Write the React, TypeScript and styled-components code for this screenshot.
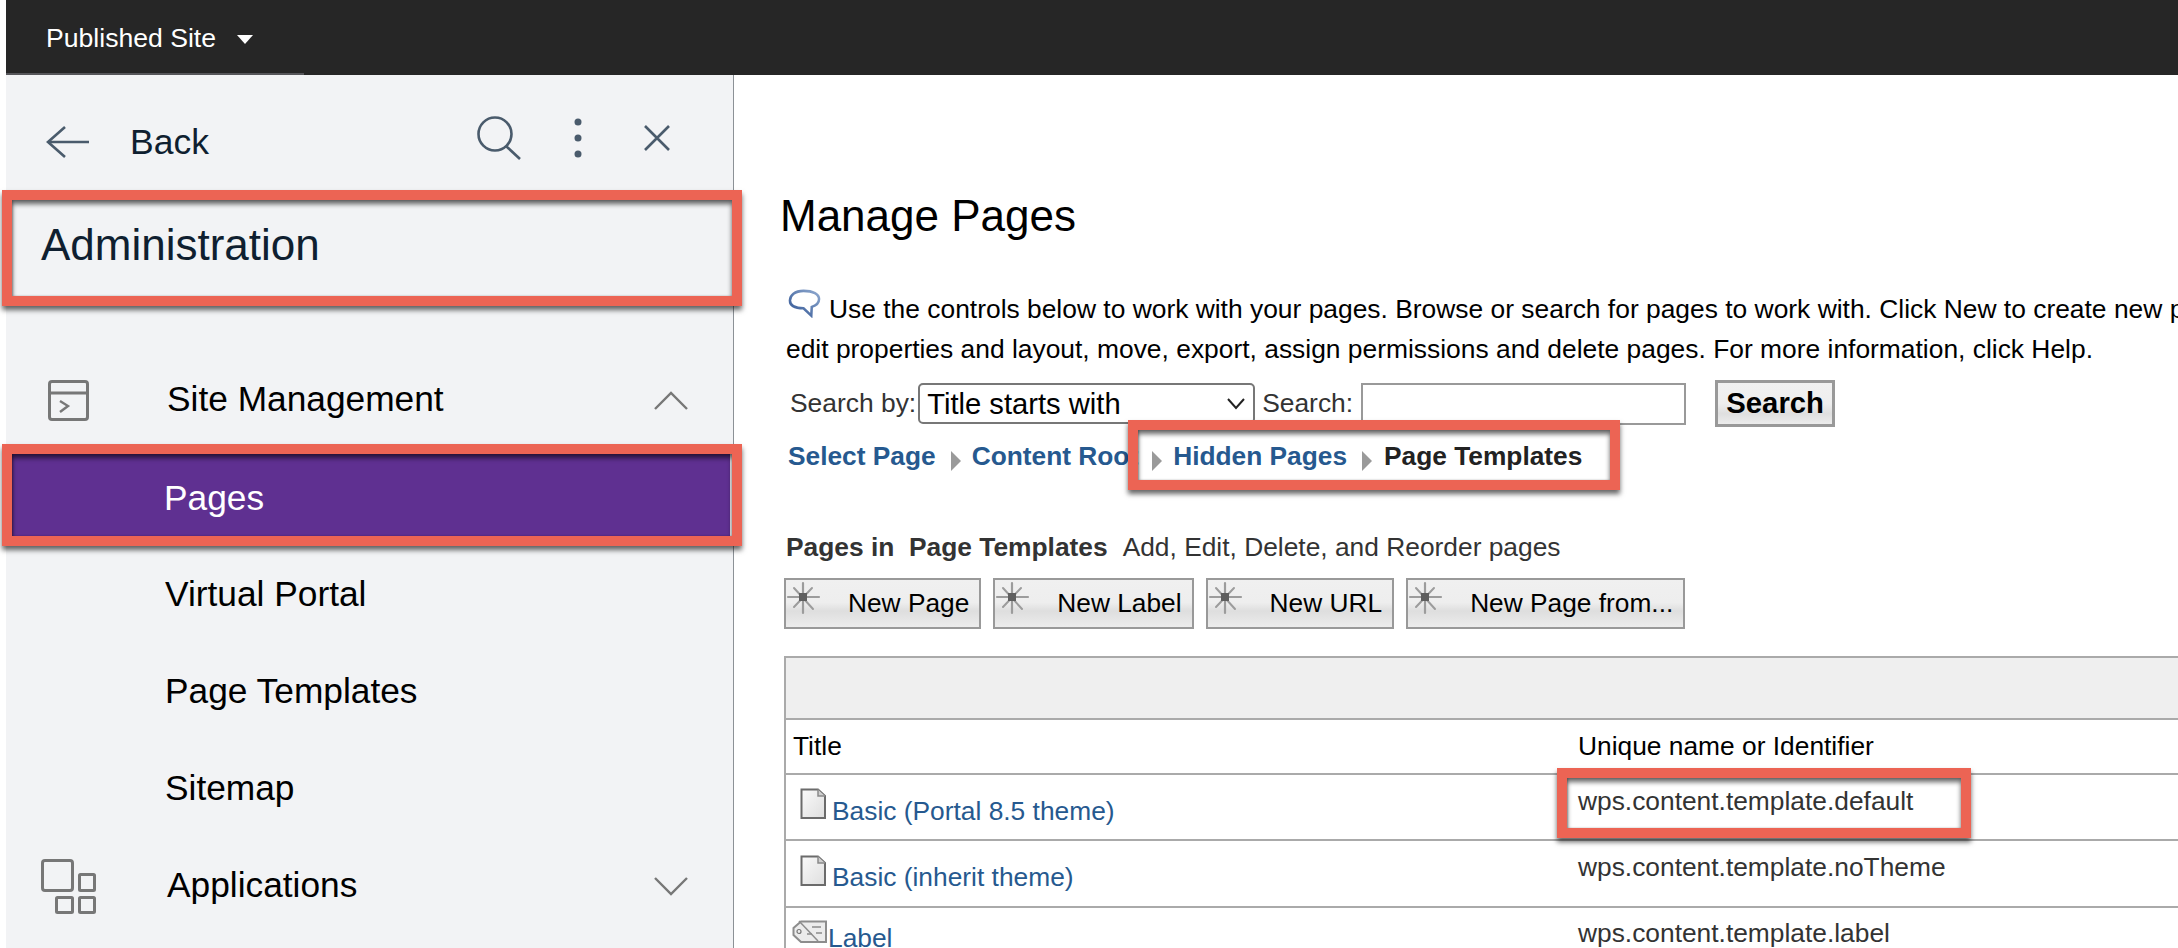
import React from "react";
import styled, { createGlobalStyle } from "styled-components";

const Global = createGlobalStyle`
  html, body { margin: 0; padding: 0; background: #fff; }
  body { font-family: "Liberation Sans", Arial, sans-serif; }
  * { box-sizing: border-box; }
`;

const Shell = styled.div`
  width: 2178px;
  height: 948px;
  padding-left: 6px;
  background: #fff;
  overflow: hidden;
  display: flex;
  flex-direction: column;
`;

const TopBar = styled.header`
  height: 75px;
  flex: none;
  background: #262626;
  display: flex;
  align-items: flex-start;
`;

const SiteSwitcher = styled.div`
  width: 298px;
  height: 75px;
  border-bottom: 2px solid #56565a;
  padding: 22px 0 0 40px;
  display: flex;
  align-items: flex-start;
  color: #fff;
  font-size: 26.6px;
  line-height: 32px;
`;

const Caret = styled.svg`
  margin: 13px 0 0 21px;
`;

const Body = styled.div`
  flex: 1;
  display: flex;
  min-height: 0;
`;

const Sidebar = styled.aside`
  width: 728px;
  flex: none;
  background: #f2f3f5;
  border-right: 1px solid #8c9196;
  display: flex;
  flex-direction: column;
`;

const BackRow = styled.div`
  height: 115px;
  flex: none;
  padding: 19px 63px 0 40px;
  display: flex;
  align-items: center;
  color: #0f1f30;
  font-size: 35.5px;
`;

const BackLabel = styled.span`
  margin-left: 40px;
`;

const ToolGroup = styled.div`
  margin-left: auto;
  display: flex;
  align-items: center;
  padding-bottom: 9px;
`;

const ToolIcon = styled.svg<{ $gap?: number }>`
  display: block;
  margin-left: ${(p) => p.$gap ?? 0}px;
`;

const Highlight = styled.div<{ $right?: number }>`
  position: absolute;
  top: -10px;
  left: -10px;
  right: ${(p) => p.$right ?? -10}px;
  bottom: -10px;
  border: 10px solid #ec6454;
  box-shadow: 0 4px 5px rgba(0, 0, 0, 0.6), inset 0 4px 5px rgba(0, 0, 0, 0.6), inset 1px 0 2px rgba(0, 0, 0, 0.25);
  pointer-events: none;
`;

const AdminRow = styled.div`
  position: relative;
  z-index: 2;
  margin: 10px 0 0 6px;
  width: 720px;
  height: 96px;
  flex: none;
  padding: 0 0 6px 29px;
  display: flex;
  align-items: center;
  color: #0f1f30;
  font-size: 44px;
`;

const NavList = styled.nav`
  margin-top: 54px;
  display: flex;
  flex-direction: column;
  font-size: 35.3px;
  color: #000;
`;

const ParentRow = styled.div`
  height: 97px;
  flex: none;
  padding: 0 45px 0 35px;
  display: flex;
  align-items: center;
`;

const IconSlot = styled.span`
  width: 55px;
  margin-right: 71px;
  padding-top: 4px;
  flex: none;
  display: flex;
  justify-content: center;
`;

const Chevron = styled.svg`
  margin: 4px 0 0 auto;
  flex: none;
`;

const SubRow = styled.div`
  height: 97px;
  flex: none;
  padding-left: 159px;
  display: flex;
  align-items: center;
`;

const ActiveRow = styled.div`
  position: relative;
  z-index: 2;
  margin: 7px 0 9px 6px;
  width: 718px;
  height: 82px;
  flex: none;
  background: #5f3091;
  color: #fff;
  padding: 6px 0 0 152px;
  display: flex;
  align-items: center;
`;

const Main = styled.main`
  flex: 1;
  min-width: 0;
  padding-left: 44px;
  display: flex;
  flex-direction: column;
  color: #000;
  & > * {
    flex: none;
  }
`;

const PageTitle = styled.h1`
  margin: 115px 0 0 2px;
  height: 52px;
  font-size: 44px;
  line-height: 52px;
  font-weight: 400;
  white-space: nowrap;
`;

const IntroLine = styled.div<{ $indent: number }>`
  height: 40px;
  padding-left: ${(p) => p.$indent}px;
  display: flex;
  align-items: center;
  font-size: 26.4px;
  line-height: 40px;
  white-space: nowrap;
`;

const Intro = styled.div`
  margin-top: 47px;
`;

const Bubble = styled.svg`
  align-self: flex-start;
  margin: -1px 8px 0 0;
  flex: none;
`;

const SearchRow = styled.form`
  margin: 11px 0 0 0;
  padding-left: 12px;
  height: 47px;
  display: flex;
  align-items: center;
  font-size: 26.4px;
  color: #333;
  white-space: nowrap;
`;

const SelectWrap = styled.span`
  position: relative;
  margin-left: 2px;
  display: block;
  width: 337px;
  height: 41px;
  flex: none;
`;

const Select = styled.select`
  appearance: none;
  width: 100%;
  height: 100%;
  border: 2px solid #777;
  border-radius: 5px;
  background: #fff;
  color: #000;
  padding: 0 0 0 7px;
  font: 29.2px "Liberation Sans", Arial, sans-serif;
`;

const SelectChevron = styled.svg`
  position: absolute;
  top: 15px;
  right: 9px;
  pointer-events: none;
`;

const SearchLabel = styled.span`
  margin-left: 7px;
`;

const SearchInput = styled.input`
  width: 325px;
  height: 42px;
  margin-left: 8px;
  flex: none;
  border: 2px solid #999;
  background: #fff;
`;

const SearchButton = styled.button`
  width: 120px;
  height: 47px;
  margin-left: 29px;
  flex: none;
  padding: 0 0 2px;
  border: 3px solid #999;
  background: linear-gradient(#f1f1f1 0%, #eeeeee 50%, #dfdfdf 75%, #ececec 100%);
  color: #000;
  font: bold 29.3px "Liberation Sans", Arial, sans-serif;
`;

const Breadcrumb = styled.div`
  margin-top: 3px;
  padding: 3px 0 0 10px;
  height: 50px;
  display: flex;
  align-items: center;
  font-size: 26.3px;
  font-weight: 700;
  white-space: nowrap;
  color: #26598f;
`;

const Separator = styled.svg<{ $left: number; $right: number }>`
  flex: none;
  margin: 8px ${(p) => p.$right}px 0 ${(p) => p.$left}px;
`;

const CrumbFocus = styled.div`
  position: relative;
  width: 472px;
  height: 50px;
  margin: -3px 0 0 0;
  padding: 3px 0 0 14px;
  flex: none;
  display: flex;
  align-items: center;
`;

const CurrentCrumb = styled.span`
  color: #222;
`;

const SectionLine = styled.div`
  margin: 49px 0 0 8px;
  height: 36px;
  display: flex;
  align-items: center;
  font-size: 26.35px;
  color: #333;
  white-space: pre;
`;

const SectionName = styled.strong`
  margin-right: 15px;
`;

const ButtonRow = styled.div`
  margin: 13px 0 0 6px;
  height: 51px;
  display: flex;
  gap: 12px;
`;

const ActionButton = styled.button`
  height: 51px;
  padding: 0 10px 0 0;
  border: 2.5px solid #999;
  background: linear-gradient(#f0f0f0 0%, #eeeeee 48%, #dedede 66%, #ececec 100%);
  color: #000;
  display: flex;
  align-items: center;
  font: 26.3px "Liberation Sans", Arial, sans-serif;
  white-space: nowrap;
`;

const Star = styled.svg`
  align-self: flex-start;
  margin: 2px 28px 0 1px;
  flex: none;
`;

const TableBox = styled.div`
  margin: 27px -20px 0 6px;
  border-top: 2px solid #aaa;
  border-left: 2px solid #aaa;
  font-size: 26.35px;
  line-height: 30px;
`;

const Toolbar = styled.div`
  height: 62px;
  background: #efefef;
  border-bottom: 2px solid #aaa;
`;

const Row = styled.div<{ $height: number }>`
  height: ${(p) => p.$height}px;
  border-bottom: 2px solid #aaa;
  display: grid;
  grid-template-columns: 792px 1fr;
  white-space: nowrap;
`;

const HeadCell = styled.div<{ $indent: number }>`
  padding: 11px 0 0 ${(p) => p.$indent}px;
  color: #000;
`;

const TitleCell = styled.div<{ $iconTop: number; $textTop: number; $iconLeft: number }>`
  display: flex;
  align-items: flex-start;
  padding-left: ${(p) => p.$iconLeft}px;
  color: #26598f;
  & > svg {
    flex: none;
    margin-top: ${(p) => p.$iconTop}px;
  }
  & > a {
    margin-top: ${(p) => p.$textTop}px;
    color: inherit;
    text-decoration: none;
  }
`;

const IdCell = styled.div<{ $top: number }>`
  padding-top: ${(p) => p.$top}px;
  color: #333;
`;

const IdFocus = styled.div`
  position: relative;
  z-index: 2;
  width: 394px;
  height: 50px;
  margin: 3px 0 0 -11px;
  padding: 8px 0 0 11px;
  color: #333;
`;

const DocIcon = () => (
  <svg width="32" height="31" viewBox="0 0 32 31">
    <defs>
      <linearGradient id="doc" x1="0" y1="0" x2="1" y2="1">
        <stop offset="0" stopColor="#fafafa" />
        <stop offset="1" stopColor="#dedede" />
      </linearGradient>
    </defs>
    <path d="M1.5 1.5H18L25 8V30H1.5Z" fill="url(#doc)" stroke="#6b6b6b" strokeWidth="2" />
    <path d="M18 1.5V8H25" fill="#cfcfcf" stroke="#8a8a8a" strokeWidth="1.5" />
  </svg>
);

const LabelIcon = () => (
  <svg width="36" height="24" viewBox="0 0 36 24">
    <path d="M9 1.5H34V22H9L1.5 15V8Z" fill="#ececec" stroke="#8d8d8d" strokeWidth="2" />
    <circle cx="7" cy="11.5" r="2" fill="none" stroke="#777" strokeWidth="1.2" />
    <path d="M7 1 26 21" stroke="#8d8d8d" strokeWidth="1.5" />
    <path d="M20 7H29M24 13H30M15 14H20" stroke="#8a8a8a" strokeWidth="1.6" />
  </svg>
);

const StarIcon = () => (
  <Star width="33" height="32" viewBox="0 0 33 32">
    <defs>
      <filter id="soft" x="-10%" y="-10%" width="120%" height="120%">
        <feGaussianBlur stdDeviation="0.5" />
      </filter>
    </defs>
    <g stroke="#9c9c9c" strokeWidth="2.2" strokeLinecap="round" filter="url(#soft)">
      <path d="M16 1V31" />
      <path d="M1 15H32" />
      <path d="M7 6 26 27" strokeWidth="2" />
      <path d="M25 6 7 25" strokeWidth="2" />
      <rect x="12" y="11" width="8" height="8" fill="#5e5e5e" stroke="none" />
    </g>
  </Star>
);

const Sep = ({ left, right }: { left: number; right: number }) => (
  <Separator $left={left} $right={right} width="10" height="20" viewBox="0 0 10 20">
    <path d="M0 0 10 10 0 20Z" fill="#9a9a9a" />
  </Separator>
);

export default function App() {
  return (
    <>
      <Global />
      <Shell>
        <TopBar>
          <SiteSwitcher>
            Published Site
            <Caret width="16" height="9" viewBox="0 0 16 9">
              <path d="M0 0H16L8 9Z" fill="#fff" />
            </Caret>
          </SiteSwitcher>
        </TopBar>
        <Body>
          <Sidebar>
            <BackRow>
              <svg width="44" height="32" viewBox="0 0 44 32" fill="none" stroke="#4a5b6c" strokeWidth="2.6">
                <path d="M43 16H2" />
                <path d="M19 1 2 16 19 31" />
              </svg>
              <BackLabel>Back</BackLabel>
              <ToolGroup>
                <ToolIcon width="45" height="44" viewBox="0 0 45 44" fill="none" stroke="#4a5b6c" strokeWidth="2.6">
                  <circle cx="18" cy="18" r="16.5" />
                  <path d="M29 30 43 43" />
                </ToolIcon>
                <ToolIcon $gap={52} width="8" height="40" viewBox="0 0 8 40" fill="#4a5b6c">
                  <circle cx="4" cy="4" r="3.5" />
                  <circle cx="4" cy="20" r="3.5" />
                  <circle cx="4" cy="36" r="3.5" />
                </ToolIcon>
                <ToolIcon $gap={62} width="26" height="26" viewBox="0 0 26 26" fill="none" stroke="#4a5b6c" strokeWidth="2.6">
                  <path d="M1 1 25 25M25 1 1 25" />
                </ToolIcon>
              </ToolGroup>
            </BackRow>
            <AdminRow>
              <Highlight />
              Administration
            </AdminRow>
            <NavList>
              <ParentRow>
                <IconSlot>
                  <svg width="41" height="41" viewBox="0 0 41 41" fill="none" stroke="#777" strokeWidth="3">
                    <rect x="1.5" y="1.5" width="38" height="38" rx="2.5" />
                    <path d="M1.5 13H39.5" />
                    <path d="M12 21 20 26 12 32" strokeWidth="2.4" />
                  </svg>
                </IconSlot>
                Site Management
                <Chevron width="34" height="19" viewBox="0 0 34 19" fill="none" stroke="#777" strokeWidth="2.4">
                  <path d="M1 18 17 2 33 18" />
                </Chevron>
              </ParentRow>
              <ActiveRow>
                <Highlight $right={-12} />
                Pages
              </ActiveRow>
              <SubRow>Virtual Portal</SubRow>
              <SubRow>Page Templates</SubRow>
              <SubRow>Sitemap</SubRow>
              <ParentRow>
                <IconSlot>
                  <svg width="55" height="55" viewBox="0 0 55 55" fill="none" stroke="#777" strokeWidth="3">
                    <rect x="1.5" y="1.5" width="30" height="30" rx="2.5" />
                    <rect x="38.5" y="15.5" width="15" height="16" rx="1" />
                    <rect x="15.5" y="38.5" width="16" height="15" rx="1" />
                    <rect x="38.5" y="38.5" width="15" height="15" rx="1" />
                  </svg>
                </IconSlot>
                Applications
                <Chevron width="34" height="19" viewBox="0 0 34 19" fill="none" stroke="#777" strokeWidth="2.4">
                  <path d="M1 1 17 17 33 1" />
                </Chevron>
              </ParentRow>
            </NavList>
          </Sidebar>
          <Main>
            <PageTitle>Manage Pages</PageTitle>
            <Intro>
              <IntroLine $indent={10}>
                <Bubble width="33" height="30" viewBox="0 0 34 30" fill="none">
                  <defs>
                    <linearGradient id="bub" x1="0" y1="1" x2="1" y2="0">
                      <stop offset="0" stopColor="#2f5493" />
                      <stop offset="1" stopColor="#8fa9cf" />
                    </linearGradient>
                  </defs>
                  <path d="M16 2.5C7 2.5 2 7 2 12.5C2 18 8 20.5 16 20.5L24 28 24.5 19C29.5 17.5 32 15 32 11C32 6 26 2.5 16 2.5Z" stroke="url(#bub)" strokeWidth="2.6" />
                </Bubble>
                Use the controls below to work with your pages. Browse or search for pages to work with. Click New to create new pages,
              </IntroLine>
              <IntroLine $indent={8}>
                edit properties and layout, move, export, assign permissions and delete pages. For more information, click Help.
              </IntroLine>
            </Intro>
            <SearchRow>
              Search by:
              <SelectWrap>
                <Select defaultValue="title">
                  <option value="title">Title starts with</option>
                </Select>
                <SelectChevron width="20" height="12" viewBox="0 0 20 12" fill="none" stroke="#222" strokeWidth="2">
                  <path d="M2 1 10 10 18 1" />
                </SelectChevron>
              </SelectWrap>
              <SearchLabel>Search:</SearchLabel>
              <SearchInput />
              <SearchButton type="button">Search</SearchButton>
            </SearchRow>
            <Breadcrumb>
              Select Page
              <Sep left={15} right={11} />
              Content Root
              <CrumbFocus>
                <Highlight />
                <Sep left={0} right={11} />
                Hidden Pages
                <Sep left={15} right={12} />
                <CurrentCrumb>Page Templates</CurrentCrumb>
              </CrumbFocus>
            </Breadcrumb>
            <SectionLine>
              <SectionName>Pages in  Page Templates</SectionName>
              Add, Edit, Delete, and Reorder pages
            </SectionLine>
            <ButtonRow>
              <ActionButton type="button"><StarIcon />New Page</ActionButton>
              <ActionButton type="button"><StarIcon />New Label</ActionButton>
              <ActionButton type="button"><StarIcon />New URL</ActionButton>
              <ActionButton type="button"><StarIcon />New Page from...</ActionButton>
            </ButtonRow>
            <TableBox>
              <Toolbar />
              <Row $height={55}>
                <HeadCell $indent={7}>Title</HeadCell>
                <HeadCell $indent={0}>Unique name or Identifier</HeadCell>
              </Row>
              <Row $height={66}>
                <TitleCell $iconLeft={14} $iconTop={13} $textTop={21}>
                  <DocIcon />
                  <a>Basic (Portal 8.5 theme)</a>
                </TitleCell>
                <IdFocus>
                  <Highlight />
                  wps.content.template.default
                </IdFocus>
              </Row>
              <Row $height={67}>
                <TitleCell $iconLeft={14} $iconTop={14} $textTop={21}>
                  <DocIcon />
                  <a>Basic (inherit theme)</a>
                </TitleCell>
                <IdCell $top={11}>wps.content.template.noTheme</IdCell>
              </Row>
              <Row $height={60}>
                <TitleCell $iconLeft={6} $iconTop={12} $textTop={15}>
                  <LabelIcon />
                  <a>Label</a>
                </TitleCell>
                <IdCell $top={10}>wps.content.template.label</IdCell>
              </Row>
            </TableBox>
          </Main>
        </Body>
      </Shell>
    </>
  );
}
